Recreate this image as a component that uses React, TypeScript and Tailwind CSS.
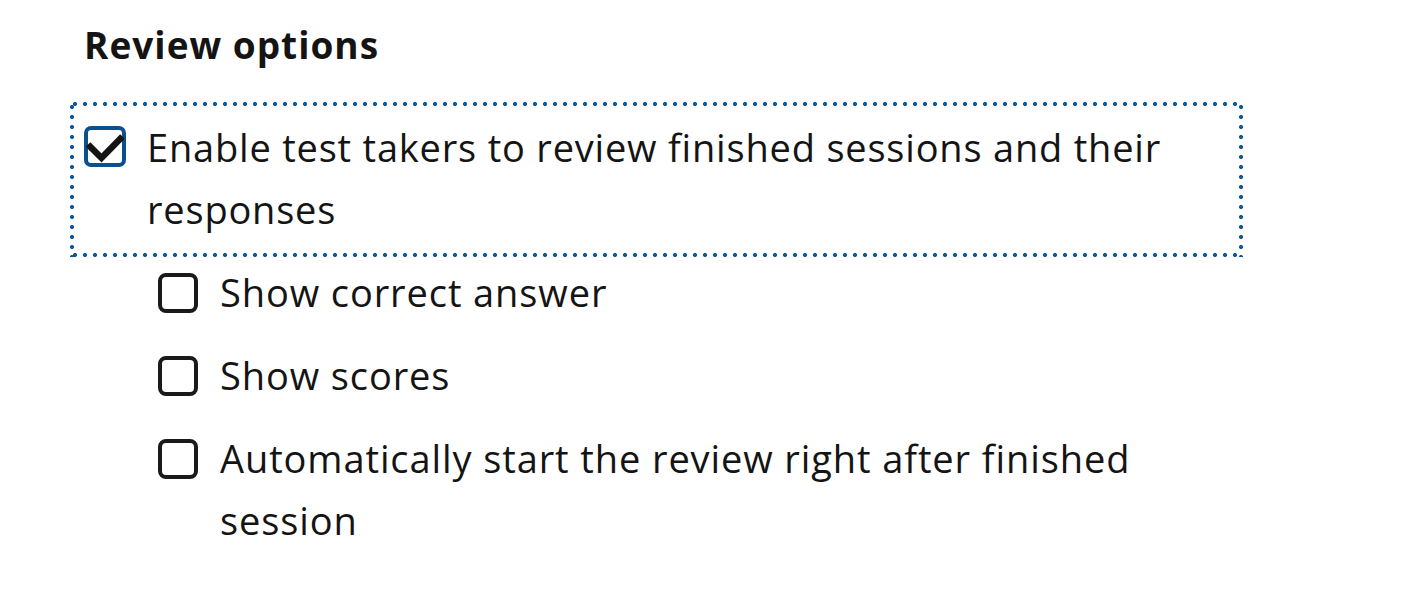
import React from "react";

const font = { fontFamily: '"Open Sans", "Noto Sans", sans-serif' };

function Unchecked() {
  return (
    <span className="mt-[12px] box-border h-[40px] w-[40px] shrink-0 rounded-[8px] border-[4px] border-[#1a1a1a] bg-white" />
  );
}

function Checked() {
  return (
    <span className="relative mt-[10px] h-[41px] w-[42px] shrink-0">
      <span className="absolute inset-0 box-border rounded-[7px] border-[4px] border-[#0b4f8f] bg-white" />
      <svg className="absolute left-0 top-0" width="44" height="42" viewBox="0 0 44 42">
        <path d="M4 18.5 L17.5 32 L38.5 10.5" fill="none" stroke="#141414" strokeWidth="6.5" strokeLinejoin="miter" />
      </svg>
    </span>
  );
}

function Dotted() {
  return (
    <>
      <span className="pointer-events-none absolute left-0 right-0 top-0 h-[4px] bg-[radial-gradient(circle,#0b5aa0_1.8px,transparent_2.3px)] bg-[length:10px_4px] bg-repeat-x" />
      <span className="pointer-events-none absolute bottom-0 left-0 right-0 h-[4px] bg-[radial-gradient(circle,#0b5aa0_1.8px,transparent_2.3px)] bg-[length:10px_4px] bg-repeat-x" />
      <span className="pointer-events-none absolute bottom-0 left-0 top-0 w-[4px] bg-[radial-gradient(circle,#0b5aa0_1.8px,transparent_2.3px)] bg-[length:4px_10px] bg-repeat-y" />
      <span className="pointer-events-none absolute bottom-0 right-0 top-0 w-[4px] bg-[radial-gradient(circle,#0b5aa0_1.8px,transparent_2.3px)] bg-[length:4px_10px] bg-repeat-y" />
    </>
  );
}

export default function App() {
  return (
    <div className="min-h-[598px] w-[1410px] bg-white text-[#141414]" style={font}>
      <div className="w-[1243px] pl-[70px] pt-[22px]">
        <h2 className="ml-[14px] text-[37px] font-bold leading-[46px] tracking-[1px]">Review options</h2>
        <div className="relative mt-[34px] flex gap-[21px] px-[14px] pb-[17px] pt-[14px]">
          <Dotted />
          <Checked />
          <p className="max-w-[1060px] text-[38px] leading-[62px] tracking-[0.8px]">
            Enable test takers to review finished sessions and their responses
          </p>
        </div>
        <ul className="ml-[88px] mt-[4px] flex flex-col gap-[21px] tracking-[0.9px]">
          <li className="flex gap-[22px]">
            <Unchecked />
            <span className="text-[38px] leading-[62px]">Show correct answer</span>
          </li>
          <li className="flex gap-[22px]">
            <Unchecked />
            <span className="text-[38px] leading-[62px]">Show scores</span>
          </li>
          <li className="flex gap-[22px]">
            <Unchecked />
            <span className="max-w-[960px] text-[38px] leading-[62px]">
              Automatically start the review right after finished session
            </span>
          </li>
        </ul>
      </div>
    </div>
  );
}
